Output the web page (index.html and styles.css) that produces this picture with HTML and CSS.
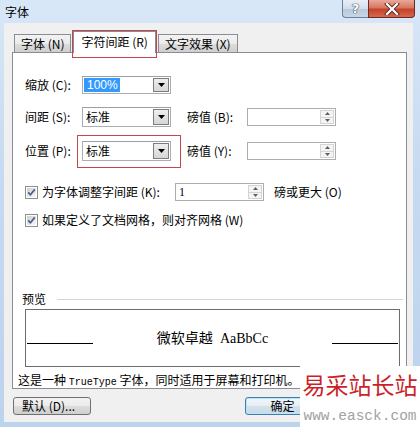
FILE: index.html
```html
<!DOCTYPE html>
<html lang="zh-CN">
<head>
<meta charset="utf-8">
<title>字体</title>
<link rel="stylesheet" href="styles.css">
</head>
<body>
<div class="window">
  <div class="titlebar">
    <span class="title">字体</span>
    <div class="caption">
      <div class="cap-btn help">?</div>
      <div class="cap-btn close">
        <svg width="16" height="12" viewBox="0 0 16 12"><path d="M3 1 L13 11 M13 1 L3 11" stroke="#5a2a22" stroke-width="4" stroke-linecap="square"/><path d="M3 1 L13 11 M13 1 L3 11" stroke="#fff" stroke-width="2.2" stroke-linecap="square"/></svg>
      </div>
    </div>
  </div>
  <div class="client">
    <div class="tabs">
      <div class="tab">字体 (N)</div>
      <div class="tab active">字符间距 (R)</div>
      <div class="tab">文字效果 (X)</div>
    </div>
    <div class="panel">
      <div class="row r1">
        <span class="lbl">缩放 (C):</span>
        <div class="combo">
          <span class="value sel">100%</span>
          <span class="drop"><svg width="7" height="4" viewBox="0 0 7 4"><path d="M0 0H7L3.5 4Z" fill="#000"/></svg></span>
        </div>
      </div>
      <div class="row r2">
        <span class="lbl">间距 (S):</span>
        <div class="combo list">
          <span class="value">标准</span>
          <span class="drop"><svg width="7" height="4" viewBox="0 0 7 4"><path d="M0 0H7L3.5 4Z" fill="#000"/></svg></span>
        </div>
        <span class="lbl2">磅值 (B):</span>
        <div class="spin">
          <span class="value"></span>
          <span class="spin-btns"><span class="sb"><svg width="5" height="3" viewBox="0 0 5 3"><path d="M0 3H5L2.5 0Z" fill="#606060"/></svg></span><span class="sb"><svg width="5" height="3" viewBox="0 0 5 3"><path d="M0 0H5L2.5 3Z" fill="#606060"/></svg></span></span>
        </div>
      </div>
      <div class="row r3">
        <span class="lbl">位置 (P):</span>
        <div class="combo list marked">
          <span class="value">标准</span>
          <span class="drop"><svg width="7" height="4" viewBox="0 0 7 4"><path d="M0 0H7L3.5 4Z" fill="#000"/></svg></span>
        </div>
        <span class="lbl2">磅值 (Y):</span>
        <div class="spin">
          <span class="value"></span>
          <span class="spin-btns"><span class="sb"><svg width="5" height="3" viewBox="0 0 5 3"><path d="M0 3H5L2.5 0Z" fill="#606060"/></svg></span><span class="sb"><svg width="5" height="3" viewBox="0 0 5 3"><path d="M0 0H5L2.5 3Z" fill="#606060"/></svg></span></span>
        </div>
      </div>
      <div class="row c1">
        <label class="check-wrap">
          <svg class="cb" width="13" height="13" viewBox="0 0 13 13"><defs><linearGradient id="g1" x1="0" y1="0" x2="1" y2="1"><stop offset="0" stop-color="#cfd0d2"/><stop offset="1" stop-color="#f8f8f8"/></linearGradient></defs><rect x="0.5" y="0.5" width="12" height="12" fill="#fff" stroke="#8e8f8f"/><rect x="2" y="2" width="9" height="9" fill="url(#g1)"/><path d="M3.2 6.4 L5.4 8.8 L9.8 3.4" fill="none" stroke="#4a5f8a" stroke-width="1.7"/></svg>
          <span>为字体调整字间距 (K):</span>
        </label>
        <div class="spin">
          <span class="value">1</span>
          <span class="spin-btns"><span class="sb"><svg width="5" height="3" viewBox="0 0 5 3"><path d="M0 3H5L2.5 0Z" fill="#606060"/></svg></span><span class="sb"><svg width="5" height="3" viewBox="0 0 5 3"><path d="M0 0H5L2.5 3Z" fill="#606060"/></svg></span></span>
        </div>
        <span class="unit">磅或更大 (O)</span>
      </div>
      <div class="row c2">
        <label class="check-wrap">
          <svg class="cb" width="13" height="13" viewBox="0 0 13 13"><defs><linearGradient id="g2" x1="0" y1="0" x2="1" y2="1"><stop offset="0" stop-color="#cfd0d2"/><stop offset="1" stop-color="#f8f8f8"/></linearGradient></defs><rect x="0.5" y="0.5" width="12" height="12" fill="#fff" stroke="#8e8f8f"/><rect x="2" y="2" width="9" height="9" fill="url(#g2)"/><path d="M3.2 6.4 L5.4 8.8 L9.8 3.4" fill="none" stroke="#4a5f8a" stroke-width="1.7"/></svg>
          <span>如果定义了文档网格，则对齐网格 (W)</span>
        </label>
      </div>
      <div class="preview-head"><span>预览</span><span class="rule"></span></div>
      <div class="preview-box">
        <span class="pline left"></span>
        <span class="sample"><span class="cn">微软卓越</span> <span class="en">AaBbCc</span></span>
        <span class="pline right"></span>
      </div>
      <div class="desc">这是一种 <span class="mono">TrueType</span> 字体，同时适用于屏幕和打印机。</div>
    </div>
    <div class="buttons">
      <div class="btn">默认 (D)...</div>
      <div class="btn ok">确定</div>
    </div>
  </div>
  <div class="watermark">
    <div class="wm-cn">易采站长站</div>
    <div class="wm-url">www.easck.com</div>
  </div>
</div>
</body>
</html>
```
FILE: styles.css
```css
html, body {
  margin: 0;
  padding: 0;
}
body {
  width: 420px;
  height: 427px;
  overflow: hidden;
  font: 12px/14px "Noto Sans CJK SC", "Liberation Sans", sans-serif;
  color: #000;
  background: #fff;
}
.window {
  position: relative;
  width: 420px;
  height: 427px;
  box-sizing: border-box;
  padding: 0 7px 5px 4px;
  display: flex;
  flex-direction: column;
  background: linear-gradient(180deg, #d8e7f8 0%, #c6daf1 40%, #bcd3ee 100%);
}
.titlebar {
  height: 23px;
  display: flex;
  align-items: flex-start;
  flex: none;
}
.title {
  margin: 5px 0 0 1px;
  line-height: 14px;
}
.caption {
  margin-left: auto;
  margin-right: -2px;
  display: flex;
}
.cap-btn {
  height: 18px;
  box-sizing: border-box;
  display: flex;
  align-items: center;
  justify-content: center;
  border: 1px solid #6f7f96;
  border-top: none;
}
.help {
  width: 26px;
  border-radius: 0 0 0 4px;
  border-right: none;
  background: linear-gradient(180deg, #e7eef7 0%, #d3deec 50%, #b9c8dc 52%, #c8d6e8 100%);
  color: #fff;
  font: bold 13px/16px "DejaVu Sans", sans-serif;
  text-shadow: 0 0 1px #445, 0 0 1px #445, 0 0 1px #445;
}
.close {
  width: 47px;
  border-radius: 0 0 4px 0;
  border-color: #6e2a20;
  background: linear-gradient(180deg, #e9a99b 0%, #d7775f 45%, #c4432b 55%, #d5684e 100%);
}
.client {
  flex: 1;
  background: #f0f0f0;
  padding: 8px 6px 0 8px;
  display: flex;
  flex-direction: column;
}
.tabs {
  display: flex;
  align-items: flex-end;
  gap: 2px;
  padding-left: 2px;
  height: 21px;
  position: relative;
  z-index: 1;
}
.tab {
  height: 18px;
  box-sizing: border-box;
  padding: 0 6px;
  border: 1px solid #898c95;
  border-bottom: none;
  line-height: 17px;
  background: linear-gradient(180deg, #f3f3f3 0%, #ebebeb 50%, #dddddd 51%, #cfcfcf 100%);
  white-space: nowrap;
}
.tab.active {
  position: relative;
  height: 22px;
  margin-bottom: -1px;
  padding: 0 7px;
  background: #fff;
  line-height: 20px;
}
.tab.active::after {
  content: "";
  position: absolute;
  left: -2px;
  right: -2px;
  top: -2px;
  bottom: -5px;
  border: 1px solid #c2474a;
}
.panel {
  position: relative;
  height: 337px;
  box-sizing: border-box;
  border: 1px solid #898c95;
  background: #fff;
  padding: 21px 0 0 12px;
  display: flex;
  flex-direction: column;
  flex: none;
}
.row {
  display: flex;
  align-items: center;
  height: 22px;
  flex: none;
}
.r2 { margin-top: 10px; }
.r3 { margin-top: 12px; }
.c1 { margin-top: 19px; }
.c2 { margin-top: 6px; }
.lbl {
  width: 57px;
  white-space: nowrap;
}
.lbl2 {
  width: 60px;
  margin-left: 16px;
  white-space: nowrap;
}
.combo {
  position: relative;
  width: 89px;
  height: 18px;
  box-sizing: border-box;
  border: 1px solid #abadb3;
  border-top-color: #9aa0a8;
  background: #fff;
  display: flex;
  align-items: center;
}
.combo.list {
  height: 20px;
}
.combo.marked::after {
  content: "";
  position: absolute;
  left: -6px;
  right: -11px;
  top: -7px;
  bottom: -8px;
  border: 1px solid #c2474a;
}
.value {
  padding-left: 2px;
  line-height: 14px;
}
.combo .value {
  padding-left: 3px;
}
.sel {
  margin-left: 1px;
  padding: 0 2px;
  background: #3399ff;
  color: #fff;
  font-family: "Liberation Sans", sans-serif;
}
.drop {
  margin-left: auto;
  margin-right: 1px;
  width: 16px;
  height: 14px;
  box-sizing: border-box;
  border: 1px solid #7d7d7d;
  background: linear-gradient(180deg, #eeeeee, #d6d6d6);
  display: flex;
  align-items: center;
  justify-content: center;
}
.combo.list .drop {
  height: 16px;
}
.spin {
  width: 89px;
  height: 18px;
  box-sizing: border-box;
  border: 1px solid #abadb3;
  background: #fff;
  display: flex;
  align-items: center;
}
.spin .value {
  padding-left: 3px;
  font-family: "Liberation Serif", serif;
}
.spin-btns {
  margin-left: auto;
  margin-right: 1px;
  width: 14px;
  height: 14px;
  display: flex;
  flex-direction: column;
}
.sb {
  flex: 1;
  box-sizing: border-box;
  border: 1px solid #d4d4d4;
  background: #f4f4f4;
  display: flex;
  align-items: center;
  justify-content: center;
}
.sb + .sb {
  border-top: none;
}
.check-wrap {
  display: flex;
  align-items: center;
  gap: 4px;
  white-space: nowrap;
}
.c1 .check-wrap {
  width: 150px;
}
.unit {
  margin-left: 10px;
  white-space: nowrap;
}
.preview-head {
  margin: 61px 0 0 -3px;
  height: 14px;
  display: flex;
  align-items: center;
  flex: none;
}
.rule {
  flex: 1;
  height: 1px;
  margin: 0 3px 0 11px;
  background: #d5d5d5;
}
.preview-box {
  margin-top: 3px;
  width: 375px;
  height: 58px;
  box-sizing: border-box;
  border: 1px solid #6d6d6d;
  display: flex;
  align-items: center;
  flex: none;
}
.pline {
  width: 66px;
  height: 1px;
  background: #000;
  margin-top: 10px;
}
.pline.left { margin-left: 1px; }
.pline.right { margin-right: 1px; }
.sample {
  flex: 1;
  text-align: center;
  font-size: 14px;
  line-height: 18px;
  white-space: nowrap;
}
.sample .en {
  font-family: "Liberation Serif", serif;
  font-size: 14px;
  margin-left: 4px;
}
.desc {
  margin: 6px 0 0 -7px;
  line-height: 14px;
  white-space: nowrap;
}
.mono {
  font-family: "Liberation Mono", monospace;
  font-size: 10px;
}
.buttons {
  margin-top: 8px;
  display: flex;
  flex: none;
}
.btn {
  width: 78px;
  height: 18px;
  box-sizing: border-box;
  margin-left: 1px;
  border: 1px solid #707070;
  border-radius: 3px;
  background: linear-gradient(180deg, #f2f2f2 0%, #ebebeb 50%, #dddddd 51%, #cfcfcf 100%);
  padding-left: 8px;
  line-height: 16px;
  white-space: nowrap;
}
.btn.ok {
  width: 75px;
  margin-left: auto;
  margin-right: 87px;
  padding-left: 0;
  text-align: center;
  border-color: #3c7fb1;
  box-shadow: inset 0 0 0 1px #b9e3fa;
  background: linear-gradient(180deg, #f1f6fa 0%, #e5eef5 50%, #d4e2ec 51%, #c9d9e6 100%);
}
.watermark {
  position: absolute;
  right: 0;
  bottom: 0;
  width: 120px;
  height: 61px;
  background: #fff;
  display: flex;
  flex-direction: column;
  align-items: center;
}
.wm-cn {
  margin-top: 4px;
  font-size: 23px;
  line-height: 28px;
  color: #cc1f2a;
  white-space: nowrap;
}
.wm-url {
  margin-top: 10px;
  font: 14.5px/16px "Liberation Mono", monospace;
  color: #a2a2a2;
  white-space: nowrap;
}
```
